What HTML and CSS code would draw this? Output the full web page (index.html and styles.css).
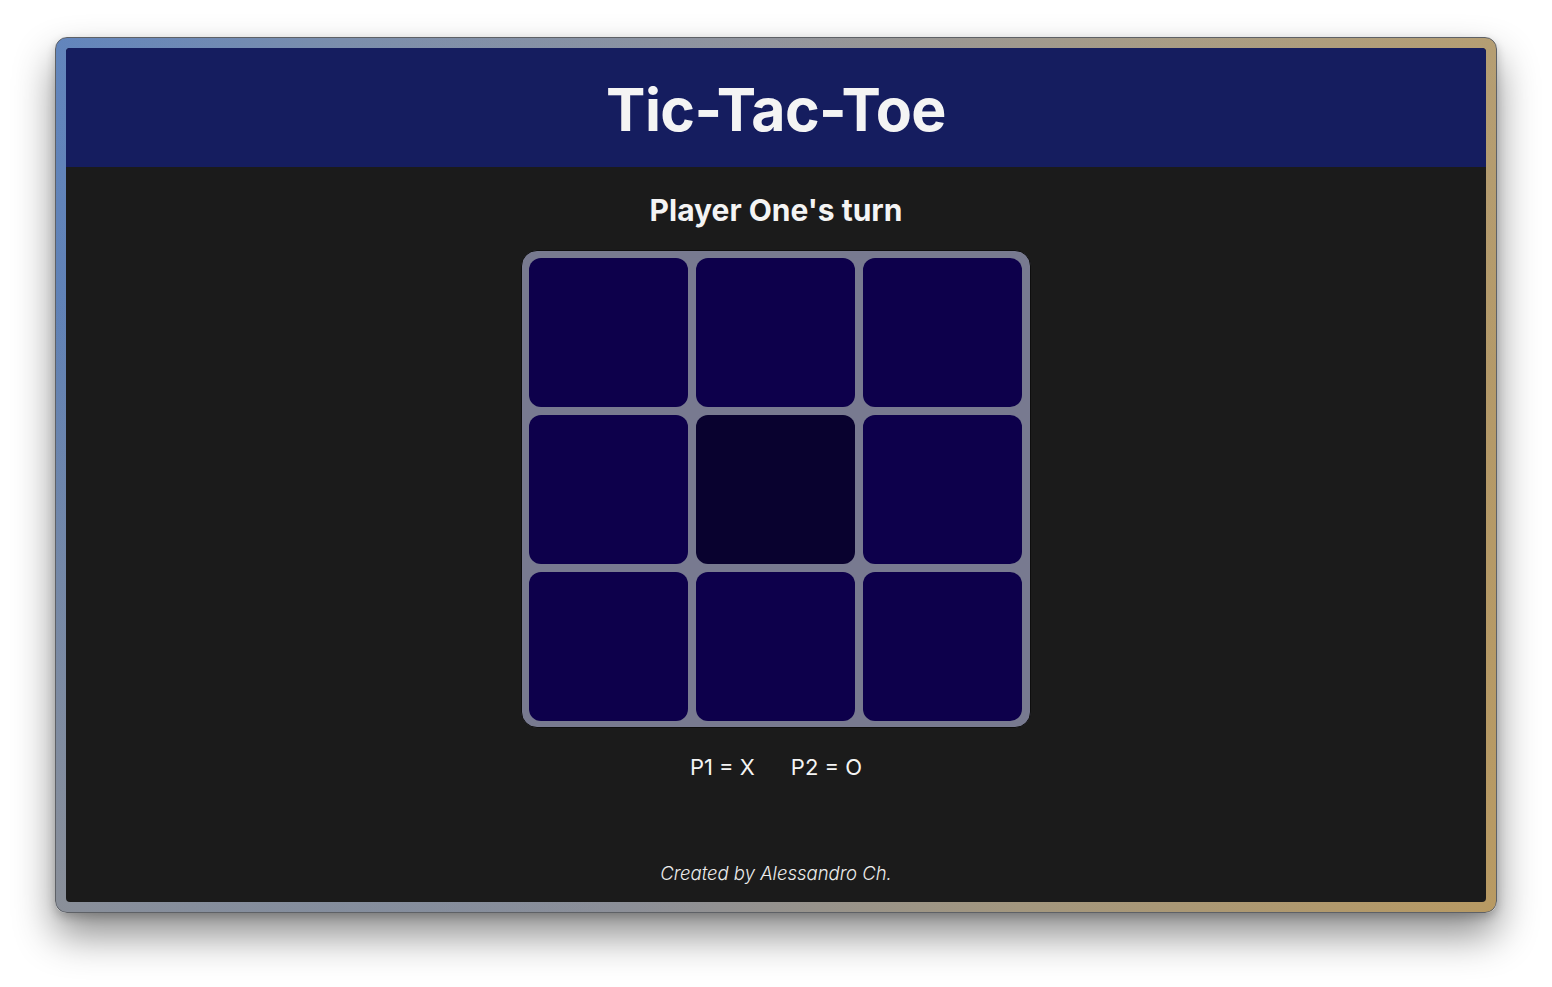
FILE: index.html
```html
<!DOCTYPE html>
<html lang="en">
<head>
<meta charset="utf-8">
<title>Tic-Tac-Toe</title>
<link rel="stylesheet" href="styles.css">
</head>
<body>
<div class="window">
  <div class="app">
    <header class="header">
      <h1 class="title">Tic-Tac-Toe</h1>
    </header>
    <main class="main">
      <h2 class="turn">Player One's turn</h2>
      <div class="board">
        <div class="cell"></div>
        <div class="cell"></div>
        <div class="cell"></div>
        <div class="cell"></div>
        <div class="cell cell-hover"></div>
        <div class="cell"></div>
        <div class="cell"></div>
        <div class="cell"></div>
        <div class="cell"></div>
      </div>
      <div class="legend">
        <span>P1 = X</span>
        <span>P2 = O</span>
      </div>
      <footer class="footer">Created by Alessandro Ch.</footer>
    </main>
  </div>
</div>
</body>
</html>
```
FILE: styles.css
```css
html, body {
  margin: 0;
  padding: 0;
  background: #ffffff;
}
body {
  padding: 37px 55px 74px 55px;
  box-sizing: border-box;
  height: 987px;
  font-family: Inter, "Noto Sans", sans-serif;
}
.window {
  box-sizing: border-box;
  width: 1442px;
  height: 876px;
  border: 1px solid #5e6166;
  border-radius: 12px;
  padding: 10px;
  background:
    radial-gradient(ellipse 45% 70% at 0% 100%, rgba(140,144,152,0.95) 0%, rgba(140,144,152,0) 100%),
    linear-gradient(to bottom, rgba(255,255,255,0.05), rgba(0,0,0,0) 40%),
    linear-gradient(100deg, #5a7fb9 0%, #7488a8 18%, #8c8f98 45%, #a3977f 70%, #b89a63 100%);
  box-shadow: 0 22px 40px rgba(0,0,0,0.45), 0 4px 10px rgba(0,0,0,0.2);
}
.app {
  height: 100%;
  border-radius: 4px;
  overflow: hidden;
  background: #1b1b1b;
  display: flex;
  flex-direction: column;
}
.header {
  height: 119px;
  background: #151d5f;
  display: flex;
  align-items: center;
  justify-content: center;
  flex-shrink: 0;
}
.title {
  margin: 0;
  color: #f4f4f4;
  font-size: 59px;
  font-weight: 700;
  letter-spacing: -0.6px;
  line-height: 1;
  padding-top: 4px;
}
.main {
  flex: 1;
  display: flex;
  flex-direction: column;
  align-items: center;
  padding-bottom: 17px;
}
.turn {
  margin: 25px 0 0 0;
  color: #f4f4f4;
  font-size: 30px;
  font-weight: 700;
  line-height: 36px;
}
.board {
  margin-top: 22px;
  box-sizing: border-box;
  width: 510px;
  padding: 7px 7px 6px 7px;
  border: 1px solid #0e0e0e;
  border-radius: 16px;
  background: #787a90;
  display: grid;
  grid-template-columns: repeat(3, 159px);
  grid-template-rows: repeat(3, 149px);
  gap: 8px;
}
.cell {
  background: #0d004b;
  border-radius: 12px;
}
.cell-hover {
  background: #09022f;
}
.legend {
  margin-top: 25px;
  display: flex;
  gap: 36px;
  color: #f4f4f4;
  font-size: 22px;
  line-height: 28px;
  font-weight: 400;
}
.footer {
  margin-top: auto;
  color: #ececec;
  font-size: 18.5px;
  font-style: italic;
  font-weight: 300;
  line-height: 24px;
}
```
